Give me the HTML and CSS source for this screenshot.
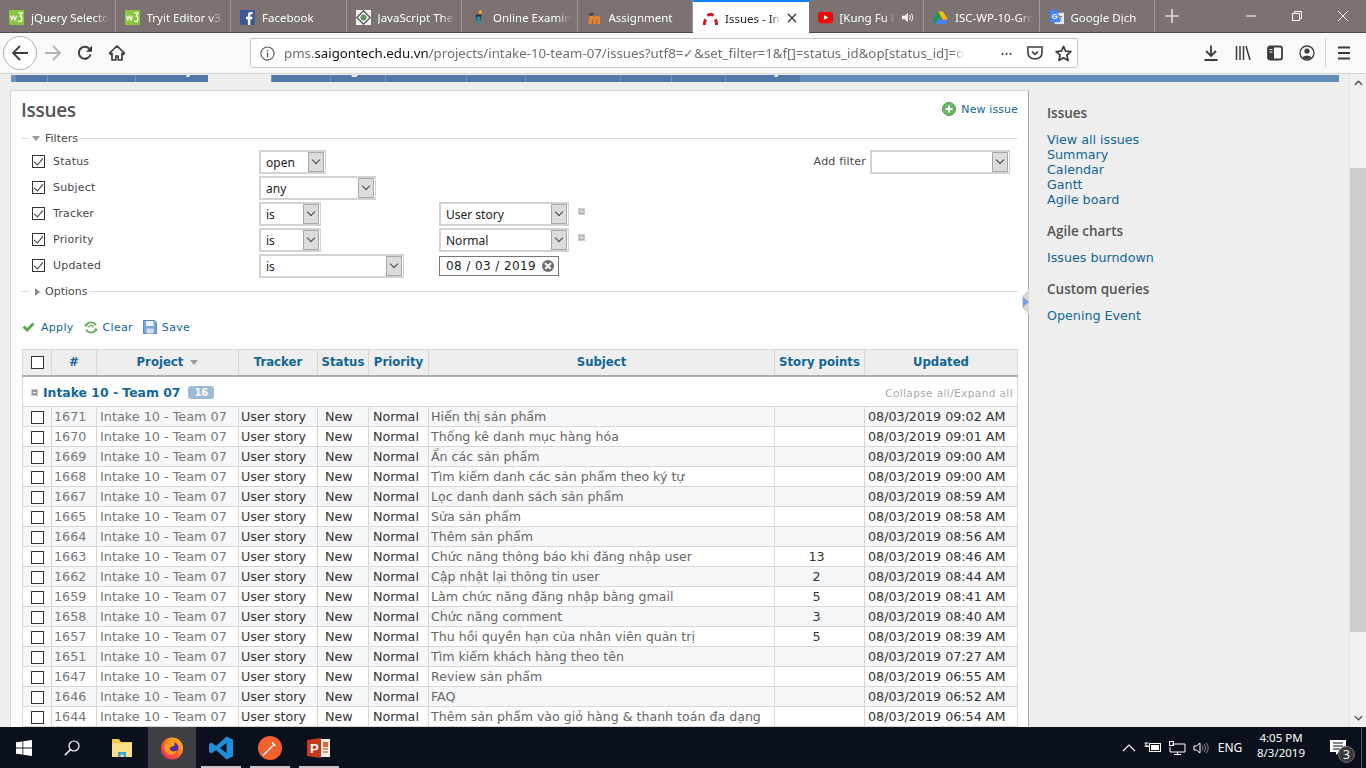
FILE: index.html
```html
<!DOCTYPE html>
<html lang="en">
<head>
    <meta charset="UTF-8">
    <meta name="viewport" content="width=device-width, initial-scale=1.0">
    <title>Issues - Intake 10 - Team 07</title>
    <link rel="stylesheet" href="styles.css">
</head>
<body>
    <div class="tabbar">
        <div class="tab">
            <svg class="fav" viewBox="0 0 16 16"><rect width="16" height="16" fill="#8cc63f"/><path d="M1.5 6l1.5 4.500 1.700-4 1.700 4L8 6" fill="none" stroke="#fff" stroke-width="1.200"/><path d="M10 3h4l-2 3.500c2.500.5 2.500 6-.5 6-1 0-1.500-.5-2-1" fill="none" stroke="#fff" stroke-width="1.300"/></svg>
            <span class="tab-label">jQuery Selectors</span>
        </div>
        <div class="tab">
            <svg class="fav" viewBox="0 0 16 16"><rect width="16" height="16" fill="#8cc63f"/><path d="M1.5 6l1.500 4.500 1.700-4 1.700 4L8 6" fill="none" stroke="#fff" stroke-width="1.200"/><path d="M10 3h4l-2 3.500c2.500.5 2.500 6-.5 6-1 0-1.500-.5-2-1" fill="none" stroke="#fff" stroke-width="1.300"/></svg>
            <span class="tab-label">Tryit Editor v3.6</span>
        </div>
        <div class="tab">
            <svg class="fav" viewBox="0 0 16 16"><rect width="16" height="16" fill="#3b5998"/><path d="M11 16V9.800h2l.4-2.500H11V5.800c0-.8.3-1.300 1.300-1.300h1.200V2.300C13 2.200 12.300 2.200 11.600 2.200 9.700 2.200 8.400 3.300 8.400 5.500v1.800H6.400v2.500h2V16z" fill="#fff"/></svg>
            <span class="tab-label">Facebook</span>
        </div>
        <div class="tab">
            <svg class="fav" viewBox="0 0 16 16"><rect width="16" height="16" fill="#f4f4f0"/><path d="M8 .8L15.200 8 8 15.200 .8 8z" fill="none" stroke="#4a4a4a" stroke-width="1.300"/><circle cx="8" cy="8" r="3.200" fill="#5f8f5f"/></svg>
            <span class="tab-label">JavaScript Then</span>
        </div>
        <div class="tab">
            <svg class="fav" viewBox="0 0 16 16"><circle cx="10" cy="2" r="1.800" fill="#f2b134"/><circle cx="6" cy="3.500" r="1.200" fill="#e2492f"/><path d="M5 5h6l-.5 6h-5z" fill="#1b2a41"/><rect x="6" y="7" width="4" height="4" fill="#1b9aaa"/><path d="M7 11h2l-.3 4H7.300z" fill="#1b9aaa"/></svg>
            <span class="tab-label">Online Examination</span>
        </div>
        <div class="tab">
            <svg class="fav" viewBox="0 0 16 16"><path d="M1 5l4-2.500L8 4.500 5 6z" fill="#444"/><path d="M2 15V8.500C2 7.200 3 6.500 4.500 6.500S7 7.200 8 8c1-.9 1.800-1.500 3-1.500 2 0 3 1 3 3V15h-3V10c0-.8-.3-1-.8-1S9.500 9.200 9.500 10v5h-3V10c0-.8-.3-1-.8-1s-.7.2-.7 1v5z" fill="#f58220"/></svg>
            <span class="tab-label">Assignment</span>
        </div>
        <div class="tab tab-active">
            <svg class="fav" viewBox="0 0 16 16"><g fill="none" stroke="#c4202a" stroke-width="3.200"><path d="M1.500 15C1.500 12.500 2 10.500 3 9"/><path d="M4.800 5C7 3 9 3 11.200 5"/><path d="M13 9c1 1.500 1.500 3.500 1.500 6"/></g></svg>
            <span class="tab-label">Issues - Intake 10</span>
            <svg class="tab-close" viewBox="0 0 10 10"><path d="M1 1l8 8M9 1l-8 8" stroke="#333" stroke-width="1.300"/></svg>
        </div>
        <div class="tab">
            <svg class="fav" viewBox="0 0 16 16"><rect y="2" width="16" height="12" rx="3" fill="#f00"/><path d="M6.300 5.300L11 8l-4.700 2.700z" fill="#fff"/></svg>
            <span class="tab-label">[Kung Fu Panda]</span>
            <svg class="tab-sound" viewBox="0 0 14 14"><path d="M1 5h3l3.500-3v10L4 9H1z" fill="#eee"/><path d="M9 4.500c1.300 1.500 1.300 3.500 0 5M11 3c2 2.500 2 5.500 0 8" fill="none" stroke="#eee" stroke-width="1.100"/></svg>
        </div>
        <div class="tab">
            <svg class="fav" viewBox="0 0 16 16"><path d="M5.300 1.500h5.400L16 10.500h-5.400z" fill="#fbbc04"/><path d="M5.300 1.500L0 10.500l2.700 4.500L8 6z" fill="#0f9d58"/><path d="M2.700 15h10.600L16 10.500H5.400z" fill="#4285f4"/></svg>
            <span class="tab-label">ISC-WP-10-Group</span>
        </div>
        <div class="tab">
            <svg class="fav" viewBox="0 0 16 16"><rect x="6" y="3" width="10" height="12" fill="#e8eaed"/><path d="M9 7h5M11.500 6v1M13 7c-.5 2-1.500 3.500-3.500 4.500M10.500 8.500c.7 1.300 1.800 2.300 3.200 3" fill="none" stroke="#666" stroke-width=".9"/><path d="M1 0h8l3 13H1z" fill="#4285f4"/><text x="3" y="9.500" class="fav-letter">G</text></svg>
            <span class="tab-label">Google Dịch</span>
        </div>
        <div class="tab-tools">
            <svg class="tab-plus" viewBox="0 0 14 14"><path d="M7 0v14M0 7h14" stroke="#ddd" stroke-width="1.600"/></svg>
        </div>
        <div class="win-btn"><svg viewBox="0 0 10 10"><path d="M0 5h10" stroke="#fff"/></svg></div>
        <div class="win-btn"><svg viewBox="0 0 10 10"><path d="M.5 2.500h7v7h-7zM2.500 2.500v-2h7v7h-2" fill="none" stroke="#fff"/></svg></div>
        <div class="win-btn"><svg viewBox="0 0 10 10"><path d="M0 0l10 10M10 0L0 10" stroke="#fff" stroke-width=".9"/></svg></div>
    </div>

    <div class="toolbar">
        <div class="back-btn">
            <svg viewBox="0 0 18 18" width="18" height="18"><path d="M17 9H2M9 2L2 9l7 7" fill="none" stroke="#3c3c3f" stroke-width="1.800"/></svg>
        </div>
        <div class="tool-btn">
            <svg viewBox="0 0 18 18" width="18" height="18"><path d="M1 9h15M9 2l7 7-7 7" fill="none" stroke="#b3b3b3" stroke-width="1.800"/></svg>
        </div>
        <div class="tool-btn">
            <svg viewBox="0 0 16 16" width="16" height="16"><path d="M13.600 9.500A6 6 0 1 1 12.300 3.700" fill="none" stroke="#3c3c3f" stroke-width="2"/><path d="M15 .8v6h-6z" fill="#3c3c3f"/></svg>
        </div>
        <div class="tool-btn">
            <svg viewBox="0 0 16 16" width="16" height="16"><path d="M8 1L.5 8.200l1.300 1.200L3 8.300V15h3.800v-4h2.400v4H13V8.300l1.200 1.100 1.300-1.200z" fill="none" stroke="#3c3c3f" stroke-width="1.700" stroke-linejoin="round"/></svg>
        </div>
        <div class="urlbar">
            <svg class="url-info" viewBox="0 0 16 16" width="15" height="15"><circle cx="8" cy="8" r="7" fill="none" stroke="#555" stroke-width="1.200"/><path d="M8 7v5M8 4v1.600" stroke="#555" stroke-width="1.400"/></svg>
            <div class="url-text">pms.<b>saigontech.edu.vn</b>/projects/intake-10-team-07/issues?utf8=✓&amp;set_filter=1&amp;f[]=status_id&amp;op[status_id]=o</div>
            <span class="url-dots">•••</span>
            <svg class="url-pocket" viewBox="0 0 16 16" width="16" height="16"><path d="M1 2h14v6c0 3.600-3.200 6-7 6s-7-2.400-7-6z" fill="none" stroke="#3c3c3f" stroke-width="1.600"/><path d="M5 6.500l3 2.800 3-2.800" fill="none" stroke="#3c3c3f" stroke-width="1.600"/></svg>
            <svg class="url-star" viewBox="0 0 16 16" width="17" height="17"><path d="M8 1.200l2 4.600 5 .5-3.800 3.300 1.100 4.900L8 12l-4.300 2.500 1.100-4.900L1 6.300l5-.5z" fill="none" stroke="#3c3c3f" stroke-width="1.600" stroke-linejoin="round"/></svg>
        </div>
        <div class="tool-right">
            <div class="tool-btn"><svg viewBox="0 0 16 16" width="16" height="16"><path d="M8 .5v10M3 6l5 5 5-5M1.500 15h13" fill="none" stroke="#3c3c3f" stroke-width="1.800"/></svg></div>
            <div class="tool-btn"><svg viewBox="0 0 16 16" width="16" height="16"><path d="M1.500 1v14M5 1v14M8.500 1v14M11 1l4 14" fill="none" stroke="#3c3c3f" stroke-width="1.500"/></svg></div>
            <div class="tool-btn"><svg viewBox="0 0 16 16" width="16" height="16"><rect x="1" y="1.500" width="14" height="13" rx="2" fill="none" stroke="#3c3c3f" stroke-width="1.800"/><rect x="1" y="1.500" width="6" height="13" fill="#3c3c3f"/><path d="M2.500 4.500h3M2.500 7h3" stroke="#fff"/></svg></div>
            <div class="tool-btn"><svg viewBox="0 0 16 16" width="16" height="16"><circle cx="8" cy="8" r="7" fill="none" stroke="#3c3c3f" stroke-width="1.300"/><circle cx="8" cy="6" r="2.600" fill="#3c3c3f"/><path d="M3.500 12.500c1-2.400 8-2.400 9 0-1.500 2-7.500 2-9 0z" fill="#3c3c3f"/></svg></div>
            <span class="tool-sep"></span>
            <div class="tool-btn"><svg viewBox="0 0 14 14" width="14" height="14"><path d="M1 1.500h12M1 7h12M1 12.500h12" stroke="#3c3c3f" stroke-width="1.800"/></svg></div>
        </div>
    </div>

    <div class="page">
        <div class="content">
            <div class="main-menu">
                <a class="menu-tab m-home">Home</a>
                <a class="menu-tab m-overview">Overview</a>
                <a class="menu-tab m-activity">Activity</a>
                <a class="menu-tab m-issues">Issues</a>
                <a class="menu-tab m-gantt">Gantt</a>
                <a class="menu-tab m-agile">Agile</a>
                <a class="menu-tab m-calendar">Calendar</a>
                <a class="menu-tab m-news">News</a>
                <a class="menu-tab m-documents">Documents</a>
                <a class="menu-tab m-wiki">Wiki</a>
                <a class="menu-tab m-files">Files</a>
                <a class="menu-tab m-story">Story</a>
            </div>
            <div class="columns">
                <div class="card">
                    <div class="title-row">
                        <h2>Issues</h2>
                        <a class="new-issue" href="#">
                            <svg viewBox="0 0 14 14" width="14" height="14"><circle cx="7" cy="7" r="6.500" fill="#6db66a" stroke="#4f9a4d"/><path d="M7 3.500v7M3.500 7h7" stroke="#fff" stroke-width="2"/></svg>
                            New issue
                        </a>
                    </div>

                    <fieldset class="filters">
                        <legend><span class="arrow-down"></span>Filters</legend>
                        <div class="filter-wrap">
                            <div class="filter-list">
                                <div class="filter-row">
                                    <label class="filter-name"><input type="checkbox" checked>Status</label>
                                    <div class="op-col"><div class="select w-67"><span>open</span><i class="select-btn"></i></div></div>
                                </div>
                                <div class="filter-row">
                                    <label class="filter-name"><input type="checkbox" checked>Subject</label>
                                    <div class="op-col"><div class="select w-117"><span>any</span><i class="select-btn"></i></div></div>
                                </div>
                                <div class="filter-row">
                                    <label class="filter-name"><input type="checkbox" checked>Tracker</label>
                                    <div class="op-col"><div class="select w-62"><span>is</span><i class="select-btn"></i></div></div>
                                    <div class="select w-130"><span>User story</span><i class="select-btn"></i></div>
                                    <span class="plus-small"></span>
                                </div>
                                <div class="filter-row">
                                    <label class="filter-name"><input type="checkbox" checked>Priority</label>
                                    <div class="op-col"><div class="select w-62"><span>is</span><i class="select-btn"></i></div></div>
                                    <div class="select w-130"><span>Normal</span><i class="select-btn"></i></div>
                                    <span class="plus-small"></span>
                                </div>
                                <div class="filter-row">
                                    <label class="filter-name"><input type="checkbox" checked>Updated</label>
                                    <div class="op-col"><div class="select w-145"><span>is</span><i class="select-btn"></i></div></div>
                                    <div class="date-input">08 / 03 / 2019<span class="date-clear"></span></div>
                                </div>
                            </div>
                            <div class="add-filter">
                                <label>Add filter</label>
                                <div class="select w-140"><span></span><i class="select-btn"></i></div>
                            </div>
                        </div>
                    </fieldset>

                    <fieldset class="options">
                        <legend><span class="arrow-right"></span>Options</legend>
                    </fieldset>

                    <div class="actions">
                        <a href="#">
                            <svg viewBox="0 0 14 14" width="15" height="14"><path d="M1 7.500l2.200-2 2.500 2.500L11 2.500l2 2L5.700 12z" fill="#5aa84f"/></svg>
                            Apply
                        </a>
                        <a href="#">
                            <svg viewBox="0 0 16 16" width="14" height="15"><path d="M13.500 5.500A6 6 0 0 0 2.500 6L1 4.500M2.500 10.500a6 6 0 0 0 11-.5l1.500 1.500" fill="none" stroke="#6fae5f" stroke-width="2.200"/><path d="M5.500 8a2.500 2.500 0 0 1 5 0" fill="none" stroke="#6fae5f" stroke-width="1.500"/></svg>
                            Clear
                        </a>
                        <a href="#">
                            <svg viewBox="0 0 14 14" width="14" height="14"><path d="M.5.500h11l2 2v11H.5z" fill="#7ba7dc" stroke="#5c87bd"/><rect x="3" y="1" width="7.500" height="5" fill="#eef3fa"/><rect x="3.500" y="8.500" width="7" height="5" fill="#d5dde8"/></svg>
                            Save
                        </a>
                    </div>

                    <table class="issues">
                        <colgroup>
                            <col class="c-check"><col class="c-id"><col class="c-project"><col class="c-tracker"><col class="c-status"><col class="c-priority"><col class="c-subject"><col class="c-points"><col class="c-updated">
                        </colgroup>
                        <thead>
                            <tr>
                                <th><input type="checkbox"></th>
                                <th>#</th>
                                <th>Project <span class="sort-arrow"></span></th>
                                <th>Tracker</th>
                                <th>Status</th>
                                <th>Priority</th>
                                <th>Subject</th>
                                <th>Story points</th>
                                <th>Updated</th>
                            </tr>
                        </thead>
                        <tbody>
                            <tr class="group">
                                <td colspan="9">
                                    <div class="group-inner">
                                        <span class="minus-small"></span>
                                        <a class="group-name" href="#">Intake 10 - Team 07</a>
                                        <span class="badge">16</span>
                                        <a class="toggle-all" href="#">Collapse all/Expand all</a>
                                    </div>
                                </td>
                            </tr>
                            <tr><td><input type="checkbox"></td><td class="id">1671</td><td class="project">Intake 10 - Team 07</td><td>User story</td><td class="status">New</td><td class="priority">Normal</td><td class="subject">Hiển thị sản phẩm</td><td class="points"></td><td class="updated">08/03/2019 09:02 AM</td></tr>
                            <tr><td><input type="checkbox"></td><td class="id">1670</td><td class="project">Intake 10 - Team 07</td><td>User story</td><td class="status">New</td><td class="priority">Normal</td><td class="subject">Thống kê danh mục hàng hóa</td><td class="points"></td><td class="updated">08/03/2019 09:01 AM</td></tr>
                            <tr><td><input type="checkbox"></td><td class="id">1669</td><td class="project">Intake 10 - Team 07</td><td>User story</td><td class="status">New</td><td class="priority">Normal</td><td class="subject">Ẩn các sản phẩm</td><td class="points"></td><td class="updated">08/03/2019 09:00 AM</td></tr>
                            <tr><td><input type="checkbox"></td><td class="id">1668</td><td class="project">Intake 10 - Team 07</td><td>User story</td><td class="status">New</td><td class="priority">Normal</td><td class="subject">Tìm kiếm danh các sản phẩm theo ký tự</td><td class="points"></td><td class="updated">08/03/2019 09:00 AM</td></tr>
                            <tr><td><input type="checkbox"></td><td class="id">1667</td><td class="project">Intake 10 - Team 07</td><td>User story</td><td class="status">New</td><td class="priority">Normal</td><td class="subject">Lọc danh danh sách sản phẩm</td><td class="points"></td><td class="updated">08/03/2019 08:59 AM</td></tr>
                            <tr><td><input type="checkbox"></td><td class="id">1665</td><td class="project">Intake 10 - Team 07</td><td>User story</td><td class="status">New</td><td class="priority">Normal</td><td class="subject">Sửa sản phẩm</td><td class="points"></td><td class="updated">08/03/2019 08:58 AM</td></tr>
                            <tr><td><input type="checkbox"></td><td class="id">1664</td><td class="project">Intake 10 - Team 07</td><td>User story</td><td class="status">New</td><td class="priority">Normal</td><td class="subject">Thêm sản phẩm</td><td class="points"></td><td class="updated">08/03/2019 08:56 AM</td></tr>
                            <tr><td><input type="checkbox"></td><td class="id">1663</td><td class="project">Intake 10 - Team 07</td><td>User story</td><td class="status">New</td><td class="priority">Normal</td><td class="subject">Chức năng thông báo khi đăng nhập user</td><td class="points">13</td><td class="updated">08/03/2019 08:46 AM</td></tr>
                            <tr><td><input type="checkbox"></td><td class="id">1662</td><td class="project">Intake 10 - Team 07</td><td>User story</td><td class="status">New</td><td class="priority">Normal</td><td class="subject">Cập nhật lại thông tin user</td><td class="points">2</td><td class="updated">08/03/2019 08:44 AM</td></tr>
                            <tr><td><input type="checkbox"></td><td class="id">1659</td><td class="project">Intake 10 - Team 07</td><td>User story</td><td class="status">New</td><td class="priority">Normal</td><td class="subject">Làm chức năng đăng nhập bằng gmail</td><td class="points">5</td><td class="updated">08/03/2019 08:41 AM</td></tr>
                            <tr><td><input type="checkbox"></td><td class="id">1658</td><td class="project">Intake 10 - Team 07</td><td>User story</td><td class="status">New</td><td class="priority">Normal</td><td class="subject">Chức năng comment</td><td class="points">3</td><td class="updated">08/03/2019 08:40 AM</td></tr>
                            <tr><td><input type="checkbox"></td><td class="id">1657</td><td class="project">Intake 10 - Team 07</td><td>User story</td><td class="status">New</td><td class="priority">Normal</td><td class="subject">Thu hồi quyền hạn của nhân viên quản trị</td><td class="points">5</td><td class="updated">08/03/2019 08:39 AM</td></tr>
                            <tr><td><input type="checkbox"></td><td class="id">1651</td><td class="project">Intake 10 - Team 07</td><td>User story</td><td class="status">New</td><td class="priority">Normal</td><td class="subject">Tìm kiếm khách hàng theo tên</td><td class="points"></td><td class="updated">08/03/2019 07:27 AM</td></tr>
                            <tr><td><input type="checkbox"></td><td class="id">1647</td><td class="project">Intake 10 - Team 07</td><td>User story</td><td class="status">New</td><td class="priority">Normal</td><td class="subject">Review sản phẩm</td><td class="points"></td><td class="updated">08/03/2019 06:55 AM</td></tr>
                            <tr><td><input type="checkbox"></td><td class="id">1646</td><td class="project">Intake 10 - Team 07</td><td>User story</td><td class="status">New</td><td class="priority">Normal</td><td class="subject">FAQ</td><td class="points"></td><td class="updated">08/03/2019 06:52 AM</td></tr>
                            <tr><td><input type="checkbox"></td><td class="id">1644</td><td class="project">Intake 10 - Team 07</td><td>User story</td><td class="status">New</td><td class="priority">Normal</td><td class="subject">Thêm sản phẩm vào giỏ hàng &amp; thanh toán đa dạng</td><td class="points"></td><td class="updated">08/03/2019 06:54 AM</td></tr>
                        </tbody>
                    </table>
                </div>

                <div class="sidebar">
                    <span class="sidebar-toggle"></span>
                    <h3>Issues</h3>
                    <a href="#">View all issues</a>
                    <a href="#">Summary</a>
                    <a href="#">Calendar</a>
                    <a href="#">Gantt</a>
                    <a href="#">Agile board</a>
                    <h3>Agile charts</h3>
                    <a href="#">Issues burndown</a>
                    <h3>Custom queries</h3>
                    <a href="#">Opening Event</a>
                </div>
            </div>
        </div>
        <div class="scrollbar">
            <svg class="scroll-arrow" viewBox="0 0 10 6" width="9" height="6"><path d="M1 5l4-4 4 4" fill="none" stroke="#505050" stroke-width="1.500"/></svg>
            <div class="scroll-track"><div class="scroll-thumb"></div></div>
            <svg class="scroll-arrow" viewBox="0 0 10 6" width="9" height="6"><path d="M1 1l4 4 4-4" fill="none" stroke="#505050" stroke-width="1.500"/></svg>
        </div>
    </div>

    <div class="taskbar">
        <div class="task-item">
            <svg viewBox="0 0 16 16" width="16" height="16"><path d="M0 2.300l6.500-.9v6.200H0zM7.300 1.300L16 0v7.600H7.300zM0 8.400h6.500v6.200L0 13.700zM7.300 8.400H16V16l-8.700-1.200z" fill="#fff"/></svg>
        </div>
        <div class="task-item">
            <svg viewBox="0 0 16 16" width="16" height="16"><circle cx="10" cy="6" r="5" fill="none" stroke="#fff" stroke-width="1.200"/><path d="M6.500 9.500L.8 15.200" stroke="#fff" stroke-width="1.500"/></svg>
        </div>
        <div class="task-item task-gap">
            <svg viewBox="0 0 22 20" width="22" height="20"><path d="M1 1h7l2 3h11v15H1z" fill="#f5c74f"/><rect x="1" y="5" width="20" height="14" fill="#fbe08a"/><path d="M7 19v-5h8v5h-2.500v-2.500h-3V19z" fill="#3c9fd6"/></svg>
        </div>
        <div class="task-item task-active">
            <svg viewBox="0 0 24 24" width="24" height="24">
                <defs>
                    <linearGradient id="fxOuter" x1="1" y1="0" x2="0" y2="1"><stop offset="0" stop-color="#ffd52e"/><stop offset=".5" stop-color="#ff6a1f"/><stop offset="1" stop-color="#e3167c"/></linearGradient>
                </defs>
                <circle cx="12" cy="12.500" r="11" fill="url(#fxOuter)"/>
                <circle cx="12" cy="12" r="6.500" fill="#5b2a9d"/>
                <path d="M14 1.500c4.500 2 6 5.500 5 9-1-3-3-4-5-4 1.500 2 .5 3.500-1.500 4-1.800.4-3 1-2.500 2.800.6 2.200 4.500 3 7.500 1-1.500 4-6 5.500-9.500 3.700C4 16 3.500 12 5 9c2-3.500 6-4 9-7.500z" fill="#ff9a1e"/>
            </svg>
        </div>
        <div class="task-item task-running">
            <svg viewBox="0 0 24 24" width="24" height="24"><path d="M17.500 .5L24 3.500v17l-6.500 3L7 14l-4.500 3.500L0 16V8l2.500-1.500L7 10zM17.500 7L11 12l6.500 5z" fill="#1e8fd8"/></svg>
        </div>
        <div class="task-item task-running">
            <svg viewBox="0 0 24 24" width="24" height="24"><circle cx="12" cy="12" r="12" fill="#f0612e"/><path d="M5 19.500L16 8.500M14 6.500l3.500 3.500" stroke="#fff" stroke-width="1.300" fill="none"/></svg>
        </div>
        <div class="task-item task-running">
            <svg viewBox="0 0 24 24" width="24" height="24"><rect x="10" y="3" width="13" height="18" fill="#f4efe9"/><path d="M14 2L0 4v16l14 2z" fill="#c8391c"/><path d="M16 6h5v5h-5z" fill="#e3603c"/><path d="M16 13h5M16 16h5" stroke="#c8391c"/><text x="3" y="16.500" class="ppt-letter">P</text></svg>
        </div>
        <div class="tray">
            <div class="tray-item w-24"><svg viewBox="0 0 14 8" width="14" height="8"><path d="M1 7l6-6 6 6" fill="none" stroke="#fff" stroke-width="1.100"/></svg></div>
            <div class="tray-item w-24"><svg viewBox="0 0 18 13" width="18" height="13"><path d="M.5 2h4M.5 5h4M2 2v3.500h3" fill="none" stroke="#fff"/><rect x="5.500" y="2.500" width="11" height="8" fill="none" stroke="#fff"/><rect x="7" y="4" width="8" height="5" fill="#fff"/></svg></div>
            <div class="tray-item w-24"><svg viewBox="0 0 17 14" width="17" height="14"><path d="M3 3h13v8H1V6M8.500 11v2.500M5 13.500h7" fill="none" stroke="#fff"/><rect x=".5" y=".5" width="4" height="4" fill="none" stroke="#fff"/></svg></div>
            <div class="tray-item w-24"><svg viewBox="0 0 16 14" width="16" height="14"><path d="M1 5h2.500L7 2v10L3.500 9H1z" fill="none" stroke="#fff"/><path d="M9 4.500c1.200 1.500 1.200 3.500 0 5M11 3c2 2.500 2 5.500 0 8M13 1.500c2.800 3.400 2.800 7.600 0 11" fill="none" stroke="#8a8a8a"/></svg></div>
            <div class="tray-item tray-lang">ENG</div>
            <div class="tray-clock"><span>4:05 PM</span><span>8/3/2019</span></div>
            <div class="tray-notify">
                <svg viewBox="0 0 16 15" width="16" height="15"><path d="M0 0h16v12H9l-3 3v-3H0z" fill="#fff"/><path d="M3 3h10M3 6h10M3 9h7" stroke="#0b111c"/></svg>
                <span class="notify-count">3</span>
            </div>
            <span class="show-desktop"></span>
        </div>
    </div>
</body>
</html>
```

FILE: styles.css
```css
* {
    box-sizing: border-box;
}
html, body {
    margin: 0;
    height: 768px;
    overflow: hidden;
}
body {
    width: 1366px;
    display: flex;
    flex-direction: column;
    font-family: "DejaVu Sans", Verdana, sans-serif;
    font-size: 12px;
    color: #333;
    background-color: #eee;
}
a {
    color: #169;
    text-decoration: none;
}

/* browser tabs */
.tabbar {
    display: flex;
    height: 33px;
    flex: none;
    background-color: #7b7271;
    border-bottom: 1px solid #4f4a4a;
    font-family: "Noto Sans", sans-serif;
    font-size: 11.5px;
    color: #fff;
}
.tab {
    display: flex;
    align-items: center;
    width: 115.5px;
    flex: none;
    padding: 3px 0 0 9px;
    border-right: 1px solid #a09a99;
}
.tab-active {
    height: 33px;
    padding: 1px 0 0 10px;
    background-color: #fff;
    color: #222;
    border-right: none;
    border-top: 2px solid #0a84ff;
}
.fav {
    width: 15px;
    height: 15px;
    flex: none;
    margin-right: 7px;
}
.fav-letter {
    font: bold 8px "Liberation Sans", sans-serif;
    fill: #fff;
}
.ppt-letter {
    font: bold 13px "Liberation Sans", sans-serif;
    fill: #fff;
}
.tab-label {
    flex: 1;
    min-width: 0;
    overflow: hidden;
    white-space: nowrap;
    -webkit-mask-image: linear-gradient(to right, #000 82%, transparent 100%);
    mask-image: linear-gradient(to right, #000 82%, transparent 100%);
    margin-right: 6px;
}
.tab-close {
    width: 10px;
    height: 10px;
    flex: none;
    margin-right: 12px;
}
.tab-sound {
    width: 13px;
    height: 13px;
    flex: none;
    margin-right: 9px;
}
.tab-tools {
    width: 73px;
    flex: none;
    display: flex;
    align-items: center;
    padding-left: 10px;
}
.tab-plus {
    width: 14px;
    height: 14px;
}
.win-btn {
    width: 46px;
    flex: none;
    display: flex;
    align-items: center;
    justify-content: center;
}
.win-btn svg {
    width: 10px;
    height: 10px;
}

/* address bar row */
.toolbar {
    display: flex;
    align-items: center;
    height: 41px;
    flex: none;
    padding-left: 3px;
    background-color: #f9f9fa;
    border-bottom: 1px solid #d8d8d8;
}
.back-btn {
    width: 34px;
    height: 34px;
    flex: none;
    display: flex;
    align-items: center;
    justify-content: center;
    border: 1px solid #b1b1b1;
    border-radius: 50%;
    background-color: #fff;
}
.tool-btn {
    width: 32px;
    height: 32px;
    flex: none;
    display: flex;
    align-items: center;
    justify-content: center;
}
.urlbar {
    display: flex;
    align-items: center;
    width: 828px;
    height: 30px;
    flex: none;
    margin-left: 117px;
    padding: 0 5px 0 9px;
    background-color: #fff;
    border: 1px solid #c9c9c9;
    border-radius: 2px;
    font-family: "Noto Sans", sans-serif;
    font-size: 13.25px;
    color: #6f6f6f;
}
.url-info {
    flex: none;
    margin-right: 9px;
}
.url-text {
    flex: none;
    white-space: nowrap;
    -webkit-mask-image: linear-gradient(to right, #000 98.5%, transparent 100%);
    mask-image: linear-gradient(to right, #000 98.5%, transparent 100%);
}
.url-text b {
    font-weight: normal;
    color: #111;
}
.url-dots {
    flex: none;
    margin-left: auto;
    font-size: 8px;
    letter-spacing: 1px;
    color: #444;
}
.url-pocket {
    flex: none;
    margin-left: 14px;
}
.url-star {
    flex: none;
    margin-left: 12px;
}
.tool-right {
    display: flex;
    align-items: center;
    margin-left: 117px;
}
.tool-sep {
    width: 1px;
    height: 30px;
    margin: 0 2px;
    background-color: #d8d8d8;
}

/* scrolled page, only the foot of the project menu is left in view */
.page {
    display: flex;
    flex: 1;
    min-height: 0;
}
.content {
    flex: 1;
    min-width: 0;
    display: flex;
    flex-direction: column;
    overflow: hidden;
}
.main-menu {
    display: flex;
    flex: none;
    height: 7px;
    margin: 1px 10px 0 11px;
    overflow: hidden;
    background-color: #628db8;
    font-weight: bold;
    font-size: 12px;
}
.menu-tab {
    display: flex;
    align-items: flex-end;
    justify-content: center;
    flex: none;
    height: 7px;
    padding-bottom: 4px;
    overflow: hidden;
    background-color: #4f78a9;
    border-left: 1px solid #6b95bd;
    color: #fff;
    line-height: 15px;
    white-space: nowrap;
}
.m-home { width: 36px; border-left-width: 5px; }
.m-overview { width: 88px; }
.m-activity { width: 73px; padding-left: 5px; justify-content: flex-start; }
.m-issues { width: 63px; background-color: #eee; border: none; color: #eee; }
.m-gantt { width: 59px; }
.m-agile { width: 55px; }
.m-calendar { width: 81px; }
.m-news { width: 59px; }
.m-documents { width: 95px; }
.m-wiki { width: 51px; }
.m-files { width: 54px; }
.m-story { width: 75px; }
.columns {
    display: flex;
    flex: 1;
    min-height: 0;
    padding: 8px 0 0 10px;
}

/* main card */
.card {
    width: 1019px;
    flex: none;
    padding: 0 10px;
    background-color: #fff;
    border: 1px solid #d7d7d7;
    border-right-color: #aaa;
    border-bottom: none;
    overflow: hidden;
}
.title-row {
    display: flex;
    align-items: flex-start;
    justify-content: space-between;
    height: 39px;
}
h2 {
    margin: 6px 0 0;
    font-family: "Open Sans", sans-serif;
    font-size: 19px;
    font-weight: 600;
    letter-spacing: -.3px;
    line-height: 26px;
    color: #555;
}
.new-issue {
    display: flex;
    align-items: center;
    gap: 5px;
    margin-top: 11px;
    font-size: 11px;
    letter-spacing: .1px;
}
fieldset {
    margin: 0;
    padding: 0;
    border: none;
    border-top: 1px solid #ddd;
    min-width: 0;
}
legend {
    display: flex;
    align-items: center;
    height: 16px;
    margin-left: 8px;
    padding: 1px 2px 0 3px;
    font-size: 11px;
    line-height: 15px;
    color: #484848;
}
.arrow-down {
    width: 0;
    height: 0;
    margin-right: 5px;
    border-left: 4px solid transparent;
    border-right: 4px solid transparent;
    border-top: 5px solid #999;
}
.arrow-right {
    width: 0;
    height: 0;
    margin: 0 5px 0 3px;
    border-top: 4px solid transparent;
    border-bottom: 4px solid transparent;
    border-left: 5px solid #888;
}
.filter-wrap {
    display: flex;
    padding: 4px 8px 0 11px;
}
.filter-list {
    display: flex;
    flex-direction: column;
}
.filter-row {
    display: flex;
    align-items: flex-start;
    height: 26px;
}
.filter-name {
    display: flex;
    align-items: center;
    width: 227px;
    height: 22px;
    font-size: 11px;
    letter-spacing: .2px;
    color: #484848;
}
input[type="checkbox"] {
    position: relative;
    appearance: none;
    -webkit-appearance: none;
    width: 13px;
    height: 13px;
    margin: 0;
    flex: none;
    background-color: #fff;
    border: 1px solid #333;
    vertical-align: middle;
}
input[type="checkbox"]:checked::after {
    content: "";
    position: absolute;
    left: 3px;
    top: 0;
    width: 4px;
    height: 8px;
    border-right: 1.5px solid #333;
    border-bottom: 1.5px solid #333;
    transform: rotate(40deg);
}
.filter-name input {
    margin-right: 8px;
}
.op-col {
    width: 180px;
    flex: none;
}
.select {
    display: flex;
    align-items: center;
    height: 24px;
    padding-left: 5px;
    background-color: #fff;
    border: 2px solid #d2d2d2;
    border-right-width: 1px;
    font-family: "Noto Sans", sans-serif;
    font-size: 12px;
    color: #222;
}
.select span {
    flex: 1;
}
.select-btn {
    position: relative;
    width: 16px;
    height: 20px;
    flex: none;
    margin-right: 1px;
    background-color: #dcdcdc;
    border: 1px solid #a8a8a8;
}
.select-btn::after {
    content: "";
    position: absolute;
    left: 4px;
    top: 4px;
    width: 5px;
    height: 5px;
    border-right: 1px solid #444;
    border-bottom: 1px solid #444;
    transform: rotate(45deg);
}
.w-62 { width: 62px; }
.w-67 { width: 67px; }
.w-117 { width: 117px; }
.w-130 { width: 130px; }
.w-140 { width: 140px; }
.w-145 { width: 145px; }
.plus-small {
    position: relative;
    width: 7px;
    height: 7px;
    margin: 6px 0 0 9px;
    background-color: #b5b5b5;
    border: 1px solid #ccc;
}
.plus-small::after {
    content: "+";
    position: absolute;
    left: 0;
    top: -3px;
    font-size: 6px;
    line-height: 10px;
    color: #fff;
}
.date-input {
    display: flex;
    align-items: center;
    justify-content: space-between;
    width: 120px;
    height: 20px;
    margin-top: 2px;
    padding: 0 4px 0 6px;
    background-color: #fff;
    border: 1px solid #767676;
    font-size: 12px;
    letter-spacing: .4px;
    white-space: nowrap;
    color: #222;
}
.date-clear {
    position: relative;
    width: 12px;
    height: 12px;
    flex: none;
    border-radius: 50%;
    background-color: #6e6e6e;
}
.date-clear::before,
.date-clear::after {
    content: "";
    position: absolute;
    left: 2px;
    top: 5px;
    width: 8px;
    height: 1.5px;
    background-color: #fff;
    transform: rotate(45deg);
}
.date-clear::after {
    transform: rotate(-45deg);
}
.add-filter {
    display: flex;
    align-items: center;
    gap: 4px;
    height: 22px;
    margin-left: auto;
    font-size: 11px;
    letter-spacing: .2px;
    color: #484848;
}
.add-filter .select {
    margin-top: 1px;
}
.filters {
    height: 153px;
}
.options {
    height: 35px;
}
.actions {
    display: flex;
    align-items: center;
    gap: 10px;
    height: 18px;
    margin-bottom: 13px;
    font-size: 11px;
    letter-spacing: .3px;
}
.actions a {
    display: flex;
    align-items: center;
    gap: 5px;
}

/* issue table */
.issues {
    table-layout: fixed;
    width: 995px;
    margin-left: 1px;
    border-collapse: collapse;
    font-size: 12.7px;
}
.c-check { width: 29px; }
.c-id { width: 45px; }
.c-project { width: 142px; }
.c-tracker { width: 79px; }
.c-status { width: 51px; }
.c-priority { width: 60px; }
.c-subject { width: 346px; }
.c-points { width: 90px; }
.c-updated { width: 153px; }
.issues th, .issues td {
    border: 1px solid #d7d7d7;
    padding: 0 2px;
    white-space: nowrap;
    overflow: hidden;
}
.issues th {
    height: 26px;
    background-color: #eee;
    border-bottom: 2px solid #aaa;
    color: #169;
    font-size: 11.7px;
    text-align: center;
}
.issues td {
    height: 20px;
    line-height: 18px;
}
.issues td:first-child, .issues th:first-child {
    padding: 0 0 0 8px;
    text-align: left;
}
.issues tbody tr:nth-child(even) {
    background-color: #f6f7f8;
}
.id, .project {
    color: #777;
}
.subject {
    color: #666;
    font-size: 12.6px;
}
.issues td.id {
    padding-left: 2px;
}
.issues td.project {
    padding-left: 3px;
    font-size: 12.8px;
}
.issues td.status {
    padding-left: 7px;
}
.issues td.priority {
    padding-left: 4px;
}
.issues td.points {
    padding-right: 8px;
    text-align: center;
}
.issues td.updated {
    padding-left: 3px;
}
.sort-arrow {
    display: inline-block;
    width: 0;
    height: 0;
    margin: 0 0 1px 3px;
    border-left: 4px solid transparent;
    border-right: 4px solid transparent;
    border-top: 5px solid #999;
}
.issues .group td {
    height: 31px;
    padding: 3px 4px 0 8px;
    background-color: #fff;
}
.group-inner {
    display: flex;
    align-items: center;
}
.minus-small {
    position: relative;
    width: 7px;
    height: 7px;
    margin-right: 5px;
    background-color: #999;
    border: 1px solid #c8c8c8;
}
.minus-small::after {
    content: "";
    position: absolute;
    left: 1px;
    top: 2px;
    width: 3px;
    height: 1px;
    background-color: #fff;
}
.group-name {
    font-size: 12.4px;
    font-weight: bold;
}
.badge {
    margin-left: 8px;
    padding: 0 6px;
    border-radius: 3px;
    background-color: #9db9d5;
    color: #fff;
    font-size: 10px;
    font-weight: bold;
    line-height: 13px;
}
.toggle-all {
    margin-left: auto;
    font-size: 10.5px;
    letter-spacing: .4px;
    color: #aaa;
}

/* right column */
.sidebar {
    position: relative;
    flex: 1;
    display: flex;
    flex-direction: column;
    align-items: flex-start;
    padding: 14px 0 0 18px;
    font-size: 12.7px;
    line-height: 15px;
}
.sidebar h3 {
    margin: 0 0 10px;
    font-family: "Open Sans", sans-serif;
    font-size: 13.5px;
    font-weight: 600;
    line-height: 18px;
    color: #555;
}
.sidebar a + h3 {
    margin-top: 15px;
}
.sidebar-toggle {
    position: absolute;
    left: -7px;
    top: 199px;
    width: 7px;
    height: 26px;
    background-color: #d7d7d7;
    clip-path: polygon(100% 0, 100% 100%, 0 70%, 0 30%);
}
.sidebar-toggle::after {
    content: "";
    position: absolute;
    left: 1px;
    top: 8px;
    border-top: 5px solid transparent;
    border-bottom: 5px solid transparent;
    border-left: 6px solid #7d9fe0;
}

/* page scrollbar */
.scrollbar {
    width: 17px;
    flex: none;
    display: flex;
    flex-direction: column;
    align-items: center;
    padding: 6px 0;
    background-color: #f1f1f1;
    border-left: 1px solid #e4e4e4;
}
.scroll-arrow {
    flex: none;
}
.scroll-track {
    flex: 1;
    width: 100%;
    padding-top: 82px;
}
.scroll-thumb {
    height: 464px;
    background-color: #cdcdcd;
}

/* windows taskbar */
.taskbar {
    display: flex;
    height: 41px;
    flex: none;
    background-color: #0b111c;
    color: #fff;
    font-family: "Noto Sans", sans-serif;
    font-size: 12px;
}
.task-item {
    position: relative;
    width: 48px;
    flex: none;
    display: flex;
    align-items: center;
    justify-content: center;
}
.task-gap {
    margin: 0 2px;
}
.task-active {
    margin-right: 1px;
    background-color: #3e4045;
}
.task-running {
    margin-right: 1px;
}
.task-running::after {
    content: "";
    position: absolute;
    left: 4px;
    right: 4px;
    bottom: 0;
    height: 2px;
    background-color: #c3c3c6;
}
.tray {
    display: flex;
    align-items: center;
    margin-left: auto;
}
.tray-item {
    display: flex;
    align-items: center;
    justify-content: center;
    height: 100%;
}
.w-24 {
    width: 24px;
}
.tray-lang {
    width: 34px;
}
.tray-clock {
    display: flex;
    flex-direction: column;
    align-items: center;
    width: 68px;
    padding-bottom: 4px;
    font-size: 11.5px;
    line-height: 14.5px;
}
.tray-notify {
    position: relative;
    display: flex;
    align-items: center;
    justify-content: center;
    width: 46px;
    height: 100%;
}
.notify-count {
    position: absolute;
    left: 23px;
    top: 19px;
    width: 17px;
    height: 17px;
    border-radius: 50%;
    background-color: #3a3a3e;
    border: 1px solid #6a6a6a;
    font-size: 12px;
    line-height: 15px;
    text-align: center;
}
.show-desktop {
    width: 5px;
    height: 100%;
    border-left: 1px solid #555;
}
```
